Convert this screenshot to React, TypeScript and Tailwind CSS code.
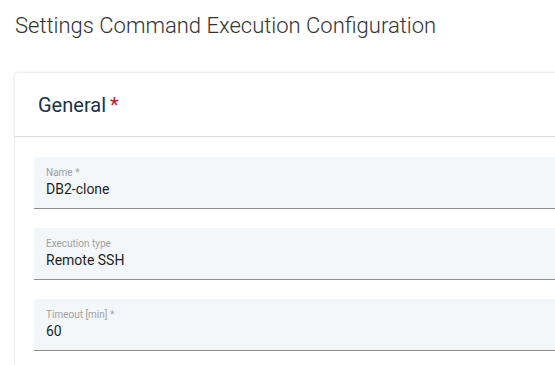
import React from "react";

function Field({ label, value }: { label: string; value: string }) {
  return (
    <div className="h-[52px] bg-[#f4f7fa] border-b border-[#8f8f8f] pl-[12px] pt-[10px] rounded-t-[4px]">
      <div className="text-[10px] leading-[12px] text-[#a0a0a0]">{label}</div>
      <div className="mt-[1px] text-[14px] leading-[18px] text-[#1f1f1f]">{value}</div>
    </div>
  );
}

export default function App() {
  return (
    <div className="w-[555px] h-[365px] overflow-hidden bg-white font-['Roboto',sans-serif]">
      <h1 className="pl-[15px] pt-[12px] text-[22px] leading-[28px] font-light text-[#333333]">
        Settings Command Execution Configuration
      </h1>
      <div className="ml-[14px] mt-[32px] w-[620px]">
        <div className="h-[65px] rounded-t-[5px] border border-[#efefef] border-b-[#dcdcdc] shadow-[0_0_3px_rgba(0,0,0,0.08)] flex items-center pl-[23px]">
          <span className="text-[20px] leading-[24px] text-[#17324d]">General</span>
          <span className="ml-[4px] text-[20px] leading-[24px] text-[#c8102e]">*</span>
        </div>
        <div className="border-l border-[#ededed] pl-[19px] pt-[20px] flex flex-col gap-[19px] pb-[20px]">
          <Field label="Name *" value="DB2-clone" />
          <Field label="Execution type" value="Remote SSH" />
          <Field label="Timeout [min] *" value="60" />
        </div>
      </div>
    </div>
  );
}
